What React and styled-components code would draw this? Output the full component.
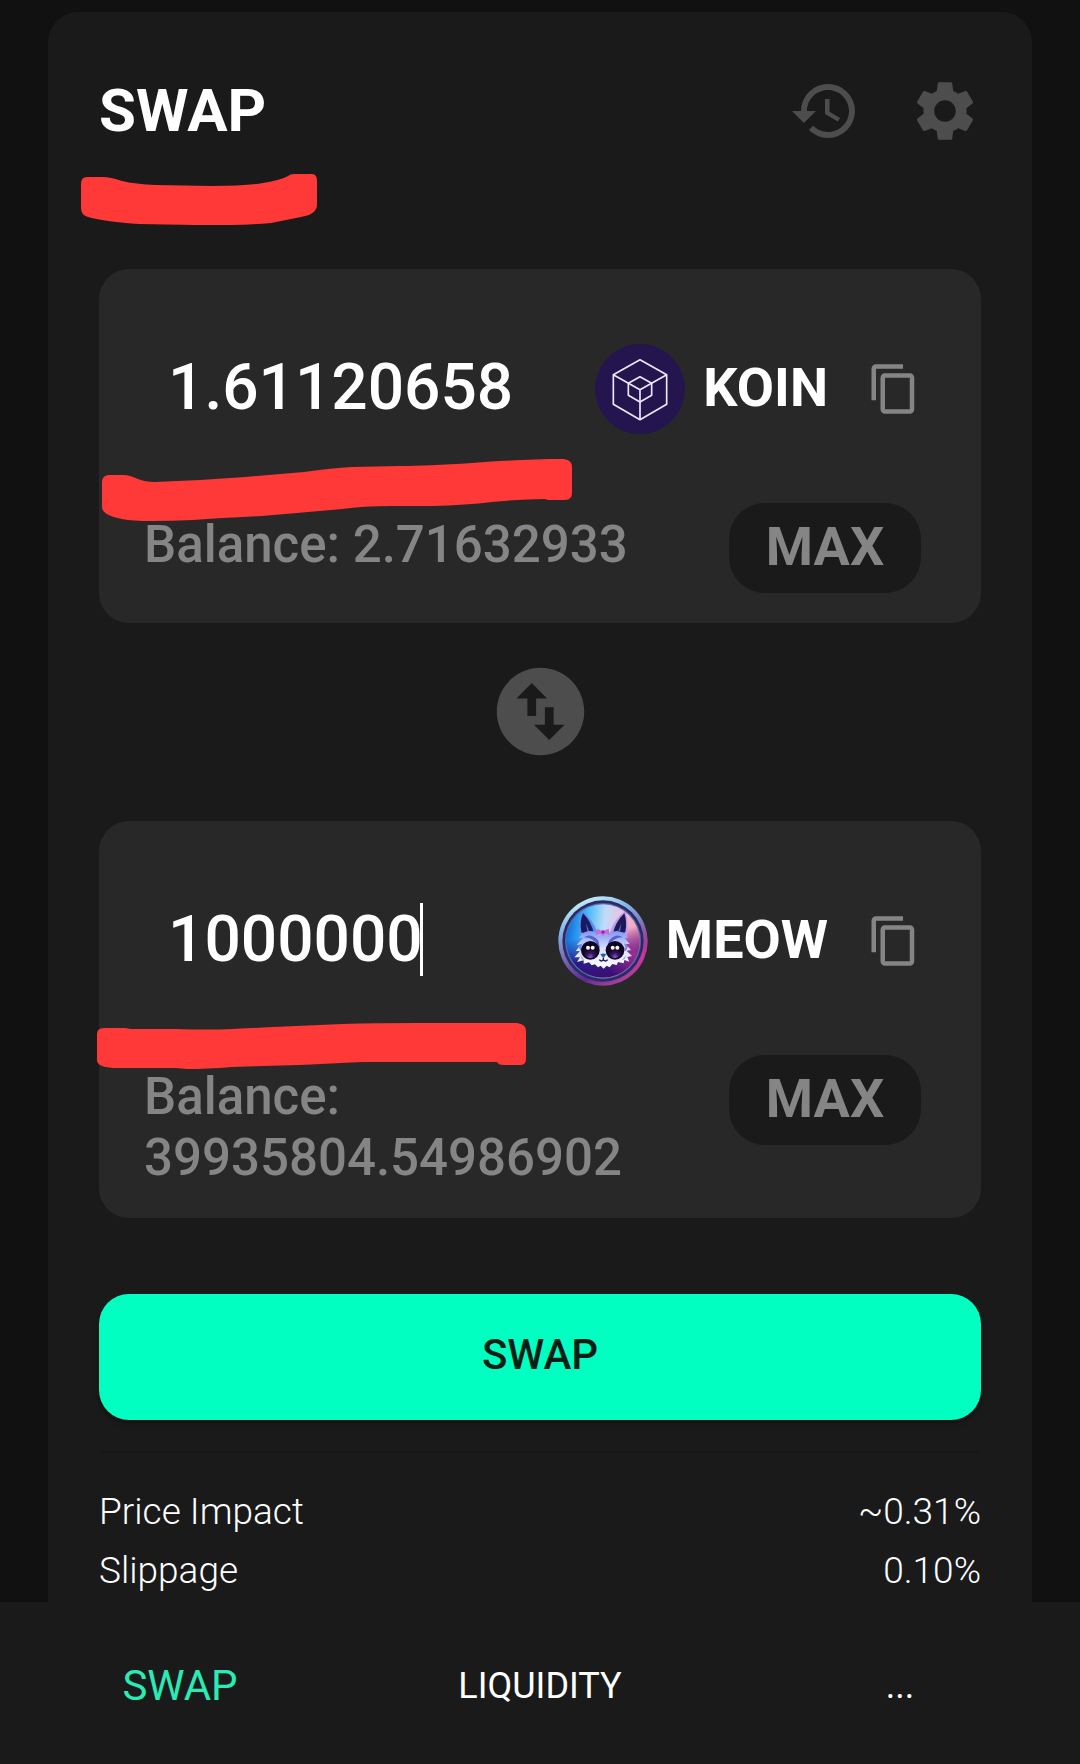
import React from 'react'
import styled, { createGlobalStyle } from 'styled-components'
import { MdHistory, MdSettings, MdContentCopy, MdSwapVerticalCircle } from 'react-icons/md'

const GlobalStyle = createGlobalStyle`
    * {
        box-sizing: border-box;
    }

    body {
        margin: 0;
        background-color: #111;
        color: #fff;
        font-family: Roboto, sans-serif;
    }

    button, input {
        font-family: inherit;
    }
`

const Page = styled.div`
    display: flex;
    flex-direction: column;
    min-height: 100vh;
    padding-top: 12px;
`

const SwapCard = styled.main`
    flex: 1;
    margin: 0 48px;
    padding: 63px 51px 2px;
    background-color: #1a1a1a;
    border-radius: 30px 30px 0 0;
`

const Header = styled.header`
    position: relative;
    display: flex;
    justify-content: space-between;
    align-items: center;
    margin-bottom: 122px;
`

const Title = styled.h1`
    margin: 0;
    font-size: 60px;
    line-height: 72px;
    font-weight: 700;
`

const HeaderActions = styled.div`
    display: flex;
    gap: 48px;
`

const IconButton = styled.button`
    display: flex;
    padding: 0;
    border: none;
    background: none;
    color: ${props => props.$light ? '#858585' : '#4d4d4d'};
    font-size: ${props => props.$size}px;
    cursor: pointer;
`

const Panel = styled.section`
    position: relative;
    padding: 75px 60px 30px 45px;
    background-color: #282828;
    border-radius: 30px;
`

const PanelTop = styled.div`
    display: flex;
    align-items: center;
    height: 90px;
    margin-bottom: 69px;
    padding-left: 24px;
`

const AmountField = styled.div`
    display: flex;
    flex: 1;
    align-items: center;
    min-width: 0;
    padding-bottom: 4px;
`

const AmountInput = styled.input`
    min-width: 0;
    max-width: 100%;
    height: 80px;
    padding: 0;
    border: none;
    outline: none;
    background: none;
    color: #fff;
    font-size: 64px;
    font-weight: 500;
    caret-color: transparent;
`

const Caret = styled.span`
    width: 3px;
    height: 73px;
    margin-left: -3px;
    background-color: #fff;
`

const TokenButton = styled.button`
    display: flex;
    align-items: center;
    gap: 18px;
    margin-right: 39px;
    padding: 0;
    border: none;
    background: none;
    color: #fff;
    font-size: 54px;
    line-height: 62px;
    font-weight: 700;
    cursor: pointer;
`

const TokenSymbol = styled.span`
    padding-bottom: 3px;
`

const TokenLogo = styled.svg`
    display: block;
    width: 90px;
    height: 90px;
`

const PanelBottom = styled.div`
    display: flex;
    justify-content: space-between;
    align-items: flex-start;
    gap: 30px;
`

const Balance = styled.p`
    flex: 1;
    margin: 0;
    padding-top: 11px;
    color: #858585;
    font-size: 51px;
    line-height: 61px;
    font-weight: 500;
`

const MaxButton = styled.button`
    width: 192px;
    height: 90px;
    padding: 0 0 3px;
    border: none;
    border-radius: 36px;
    background-color: #1a1a1a;
    color: #858585;
    font-size: 54px;
    font-weight: 700;
    cursor: pointer;
`

const SwitchRow = styled.div`
    display: flex;
    justify-content: center;
    padding: 36px 0 57px;
`

const SubmitButton = styled.button`
    display: block;
    width: 100%;
    height: 126px;
    margin-top: 76px;
    padding: 0 0 6px;
    border: none;
    border-radius: 30px;
    background-color: #00ffc0;
    box-shadow: 0 3px 5px rgba(0, 0, 0, 0.4);
    color: #041f16;
    font-size: 42px;
    font-weight: 500;
    cursor: pointer;
`

const Divider = styled.hr`
    height: 2px;
    margin: 31px 0 29px;
    border: none;
    background-color: #171717;
`

const Details = styled.dl`
    margin: 0;
`

const DetailRow = styled.div`
    display: flex;
    justify-content: space-between;
    font-size: 37px;
    line-height: 59px;
    font-weight: 300;

    dd {
        margin: 0;
    }
`

const BottomNav = styled.nav`
    display: grid;
    grid-template-columns: repeat(3, 1fr);
    padding: 59px 0 53px;
    background-color: #1a1a1a;
`

const NavLink = styled.a`
    color: ${props => props.$active ? '#2aebb3' : '#fff'};
    font-size: ${props => props.$active ? '42px' : '36px'};
    line-height: 50px;
    text-align: center;
    text-decoration: none;
`

// red marker strokes, drawn on top of the panels
const MarkerStroke = styled.svg`
    position: absolute;
    left: ${props => props.$left}px;
    top: ${props => props.$top}px;
    fill: #ff3838;
    pointer-events: none;
`

function Marker({ left, top, width, height, d }) {
    return (
        <MarkerStroke
            $left={left}
            $top={top}
            width={width}
            height={height}
            viewBox={`0 0 ${width} ${height}`}
            aria-hidden="true"
        >
            <path d={d} />
        </MarkerStroke>
    )
}

const titleMarker = 'M0 10Q0 3 6 3H22Q29 3 41 7Q54 10 75 11L131 12Q165 12 182 9Q200 6 207 2Q209 0 213 0H231Q236 0 236 7V31Q236 37 228 41Q216 44 190 49Q165 51 150 51H112Q70 50 58 50Q25 48 7 43Q0 41 0 34Z'
const koinMarker = 'M0 22Q1 16 7 16H22Q27 16 36 20Q43 23 53 23L98 21L143 18L202 13Q230 9 250 8L298 7Q325 7 370 4Q395 2 420 1L446 0H462Q470 1 470 8V34Q470 41 463 41H446L443 40Q420 40 390 43Q365 46 330 47H290Q260 47 240 50L195 54L160 57Q120 59 91 61Q70 62 50 62Q30 62 20 60Q0 56 0 48Z'
const meowMarker = 'M0 11Q0 5 7 5H28L34 6H79Q110 7 135 6L176 4L245 1Q280 0 320 0H420Q429 1 429 8V36Q429 42 423 42H407Q401 42 400 39H327H265L203 42L135 44Q110 46 90 46L79 45H21Q0 45 0 37Z'

function KoinLogo() {
    return (
        <TokenLogo viewBox="0 0 270 270" aria-hidden="true">
            <circle cx="135" cy="135" r="135" fill="#24154f" />
            <g fill="none" stroke="#efe6ff" strokeWidth="5" strokeLinejoin="round">
                <path d="M135 47L215 92V181L135 227L55 181V92Z" />
                <path d="M55 92L135 137L215 92M135 137V227" />
                <path d="M135 98L170 118V154L135 174L100 154V118Z" />
            </g>
        </TokenLogo>
    )
}

function MeowLogo() {
    return (
        <TokenLogo viewBox="0 0 270 270" aria-hidden="true">
            <defs>
                <linearGradient id="meowRim" x1="0.3" y1="0" x2="0.7" y2="1">
                    <stop offset="0" stopColor="#c8f4ff" />
                    <stop offset="0.25" stopColor="#84b4e8" />
                    <stop offset="0.5" stopColor="#7a70b8" />
                    <stop offset="0.8" stopColor="#5e2a90" />
                    <stop offset="1" stopColor="#b0489c" />
                </linearGradient>
                <linearGradient id="meowSky" x1="0" y1="0.4" x2="1" y2="0.5">
                    <stop offset="0" stopColor="#0e6fe0" />
                    <stop offset="0.25" stopColor="#42b8f5" />
                    <stop offset="0.5" stopColor="#bfdcfb" />
                    <stop offset="0.75" stopColor="#f0bfdc" />
                    <stop offset="1" stopColor="#f79ba8" />
                </linearGradient>
                <linearGradient id="meowShade" x1="0.4" y1="0" x2="0.6" y2="1">
                    <stop offset="0.4" stopColor="#2a1690" stopOpacity="0" />
                    <stop offset="0.72" stopColor="#25107c" stopOpacity="0.92" />
                    <stop offset="1" stopColor="#3d0a70" />
                </linearGradient>
                <linearGradient id="meowFur" x1="0" y1="0" x2="0" y2="1">
                    <stop offset="0" stopColor="#7a97f2" />
                    <stop offset="0.45" stopColor="#d9dcff" />
                    <stop offset="1" stopColor="#ffffff" />
                </linearGradient>
                <radialGradient id="meowEye" cx="0.5" cy="0.9" r="0.6">
                    <stop offset="0" stopColor="#8a58c8" />
                    <stop offset="0.45" stopColor="#35145f" />
                    <stop offset="1" stopColor="#0b0620" />
                </radialGradient>
                <radialGradient id="meowBlush" cx="0.92" cy="0.68" r="0.4">
                    <stop offset="0" stopColor="#d83a9c" stopOpacity="0.9" />
                    <stop offset="1" stopColor="#d83a9c" stopOpacity="0" />
                </radialGradient>
            </defs>
            <circle cx="135" cy="135" r="134" fill="url(#meowRim)" />
            <circle cx="135" cy="135" r="134" fill="url(#meowBlush)" />
            <circle cx="135" cy="135" r="122" fill="#2b2a62" />
            <circle cx="135" cy="135" r="114" fill="#5a68b0" />
            <circle cx="135" cy="135" r="110" fill="url(#meowSky)" />
            <circle cx="135" cy="135" r="110" fill="url(#meowShade)" />
            <circle cx="135" cy="135" r="110" fill="url(#meowBlush)" opacity="0.7" />
            <path d="M66 122Q60 80 72 46Q104 69 118 109L102 136Z" fill="#5f8cf0" />
            <path d="M70 108Q64 78 75 52Q100 77 108 113L95 104L87 118Z" fill="#171b62" />
            <path d="M206 122Q214 80 201 46Q169 69 156 109L170 136Z" fill="#b79cf0" />
            <path d="M202 108Q208 78 199 52Q173 77 164 114L178 104L187 118Z" fill="#1e1a58" />
            <path d="M84 82L93 106L88 104ZM190 82L181 106L186 104Z" fill="#6c7be0" />
            <path
                d="M72 112L63 126L76 125L56 147L70 145L53 165L66 165L49 184L66 184L57 198L77 193L77 203L93 199L101 208L111 205L120 214L128 209L137 218L146 209L155 214L163 204L176 207L180 198L197 202L199 192L214 197L208 183L222 180L206 164L219 162L203 145L215 143L199 125L210 126L199 110L178 105L158 107L147 118L135 112L122 119L110 106L90 105Z"
                fill="url(#meowFur)"
            />
            <path d="M78 124Q98 110 121 134L126 157L112 137Q95 124 78 124ZM194 124Q175 110 153 134L146 157L160 137Q177 124 194 124Z" fill="#5a5fd0" />
            <path d="M60 151L74 142L68 157L80 151L69 166ZM211 151L198 142L203 157L191 151L203 166Z" fill="#7f85e0" />
            <path d="M66 176L80 193L71 189ZM206 176L191 193L200 189Z" fill="#9e9ce8" />
            <ellipse cx="97" cy="163" rx="28" ry="28" fill="#0d0726" />
            <ellipse cx="171" cy="163" rx="28" ry="28" fill="#0d0726" />
            <ellipse cx="97" cy="165" rx="21" ry="22" fill="url(#meowEye)" />
            <ellipse cx="171" cy="165" rx="21" ry="22" fill="url(#meowEye)" />
            <g fill="#fff3e8">
                <circle cx="90" cy="155" r="6" />
                <circle cx="104" cy="155" r="6" />
                <circle cx="164" cy="155" r="6" />
                <circle cx="178" cy="155" r="6" />
            </g>
            <path d="M118 98L134 106L152 98L155 117L139 114L135 120L130 114L114 117Z" fill="#cf6ad8" />
            <circle cx="135" cy="108" r="5" fill="#7b2db0" />
            <path d="M127 175Q136 170 145 175L136 187Z" fill="#2a5ca0" />
            <path d="M136 186V191M124 191Q130 199 136 191Q142 199 149 191" fill="none" stroke="#231b50" strokeWidth="4" />
        </TokenLogo>
    )
}

function TokenPanel({ label, symbol, logo, amount, setAmount, balance, active, children }) {
    const id = `amount-${symbol}`

    return (
        <Panel>
            <PanelTop>
                <AmountField>
                    <AmountInput
                        id={id}
                        aria-label={label}
                        inputMode="decimal"
                        value={amount}
                        onChange={(e) => setAmount(e.target.value)}
                        style={{ width: `${amount.length}ch` }}
                    />
                    {active && <Caret />}
                </AmountField>
                <TokenButton type="button">
                    {logo}
                    <TokenSymbol>{symbol}</TokenSymbol>
                </TokenButton>
                <IconButton type="button" $size={54} $light aria-label={`Copy ${symbol} address`}>
                    <MdContentCopy />
                </IconButton>
            </PanelTop>
            <PanelBottom>
                <Balance>Balance: {balance}</Balance>
                <MaxButton type="button" onClick={() => setAmount(balance)}>MAX</MaxButton>
            </PanelBottom>
            {children}
        </Panel>
    )
}

export default function App() {
    const [fromAmount, setFromAmount] = React.useState('1.61120658')
    const [toAmount, setToAmount] = React.useState('1000000')

    return (
        <>
            <GlobalStyle />
            <Page>
                <SwapCard>
                    <Header>
                        <Title>SWAP</Title>
                        <HeaderActions>
                            <IconButton type="button" $size={72} aria-label="History">
                                <MdHistory />
                            </IconButton>
                            <IconButton type="button" $size={72} aria-label="Settings">
                                <MdSettings />
                            </IconButton>
                        </HeaderActions>
                        <Marker left={-18} top={99} width={236} height={51} d={titleMarker} />
                    </Header>

                    <TokenPanel
                        label="You pay"
                        symbol="KOIN"
                        logo={<KoinLogo />}
                        amount={fromAmount}
                        setAmount={setFromAmount}
                        balance="2.71632933"
                    >
                        <Marker left={3} top={190} width={470} height={62} d={koinMarker} />
                    </TokenPanel>

                    <SwitchRow>
                        <IconButton type="button" $size={105} aria-label="Switch tokens">
                            <MdSwapVerticalCircle />
                        </IconButton>
                    </SwitchRow>

                    <TokenPanel
                        label="You receive"
                        symbol="MEOW"
                        logo={<MeowLogo />}
                        amount={toAmount}
                        setAmount={setToAmount}
                        balance="39935804.54986902"
                        active
                    >
                        <Marker left={-2} top={202} width={429} height={46} d={meowMarker} />
                    </TokenPanel>

                    <SubmitButton type="button">SWAP</SubmitButton>
                    <Divider />
                    <Details>
                        <DetailRow>
                            <dt>Price Impact</dt>
                            <dd>~0.31%</dd>
                        </DetailRow>
                        <DetailRow>
                            <dt>Slippage</dt>
                            <dd>0.10%</dd>
                        </DetailRow>
                    </Details>
                </SwapCard>
                <BottomNav>
                    <NavLink href="#swap" $active>SWAP</NavLink>
                    <NavLink href="#liquidity">LIQUIDITY</NavLink>
                    <NavLink href="#more" aria-label="More">...</NavLink>
                </BottomNav>
            </Page>
        </>
    )
}
